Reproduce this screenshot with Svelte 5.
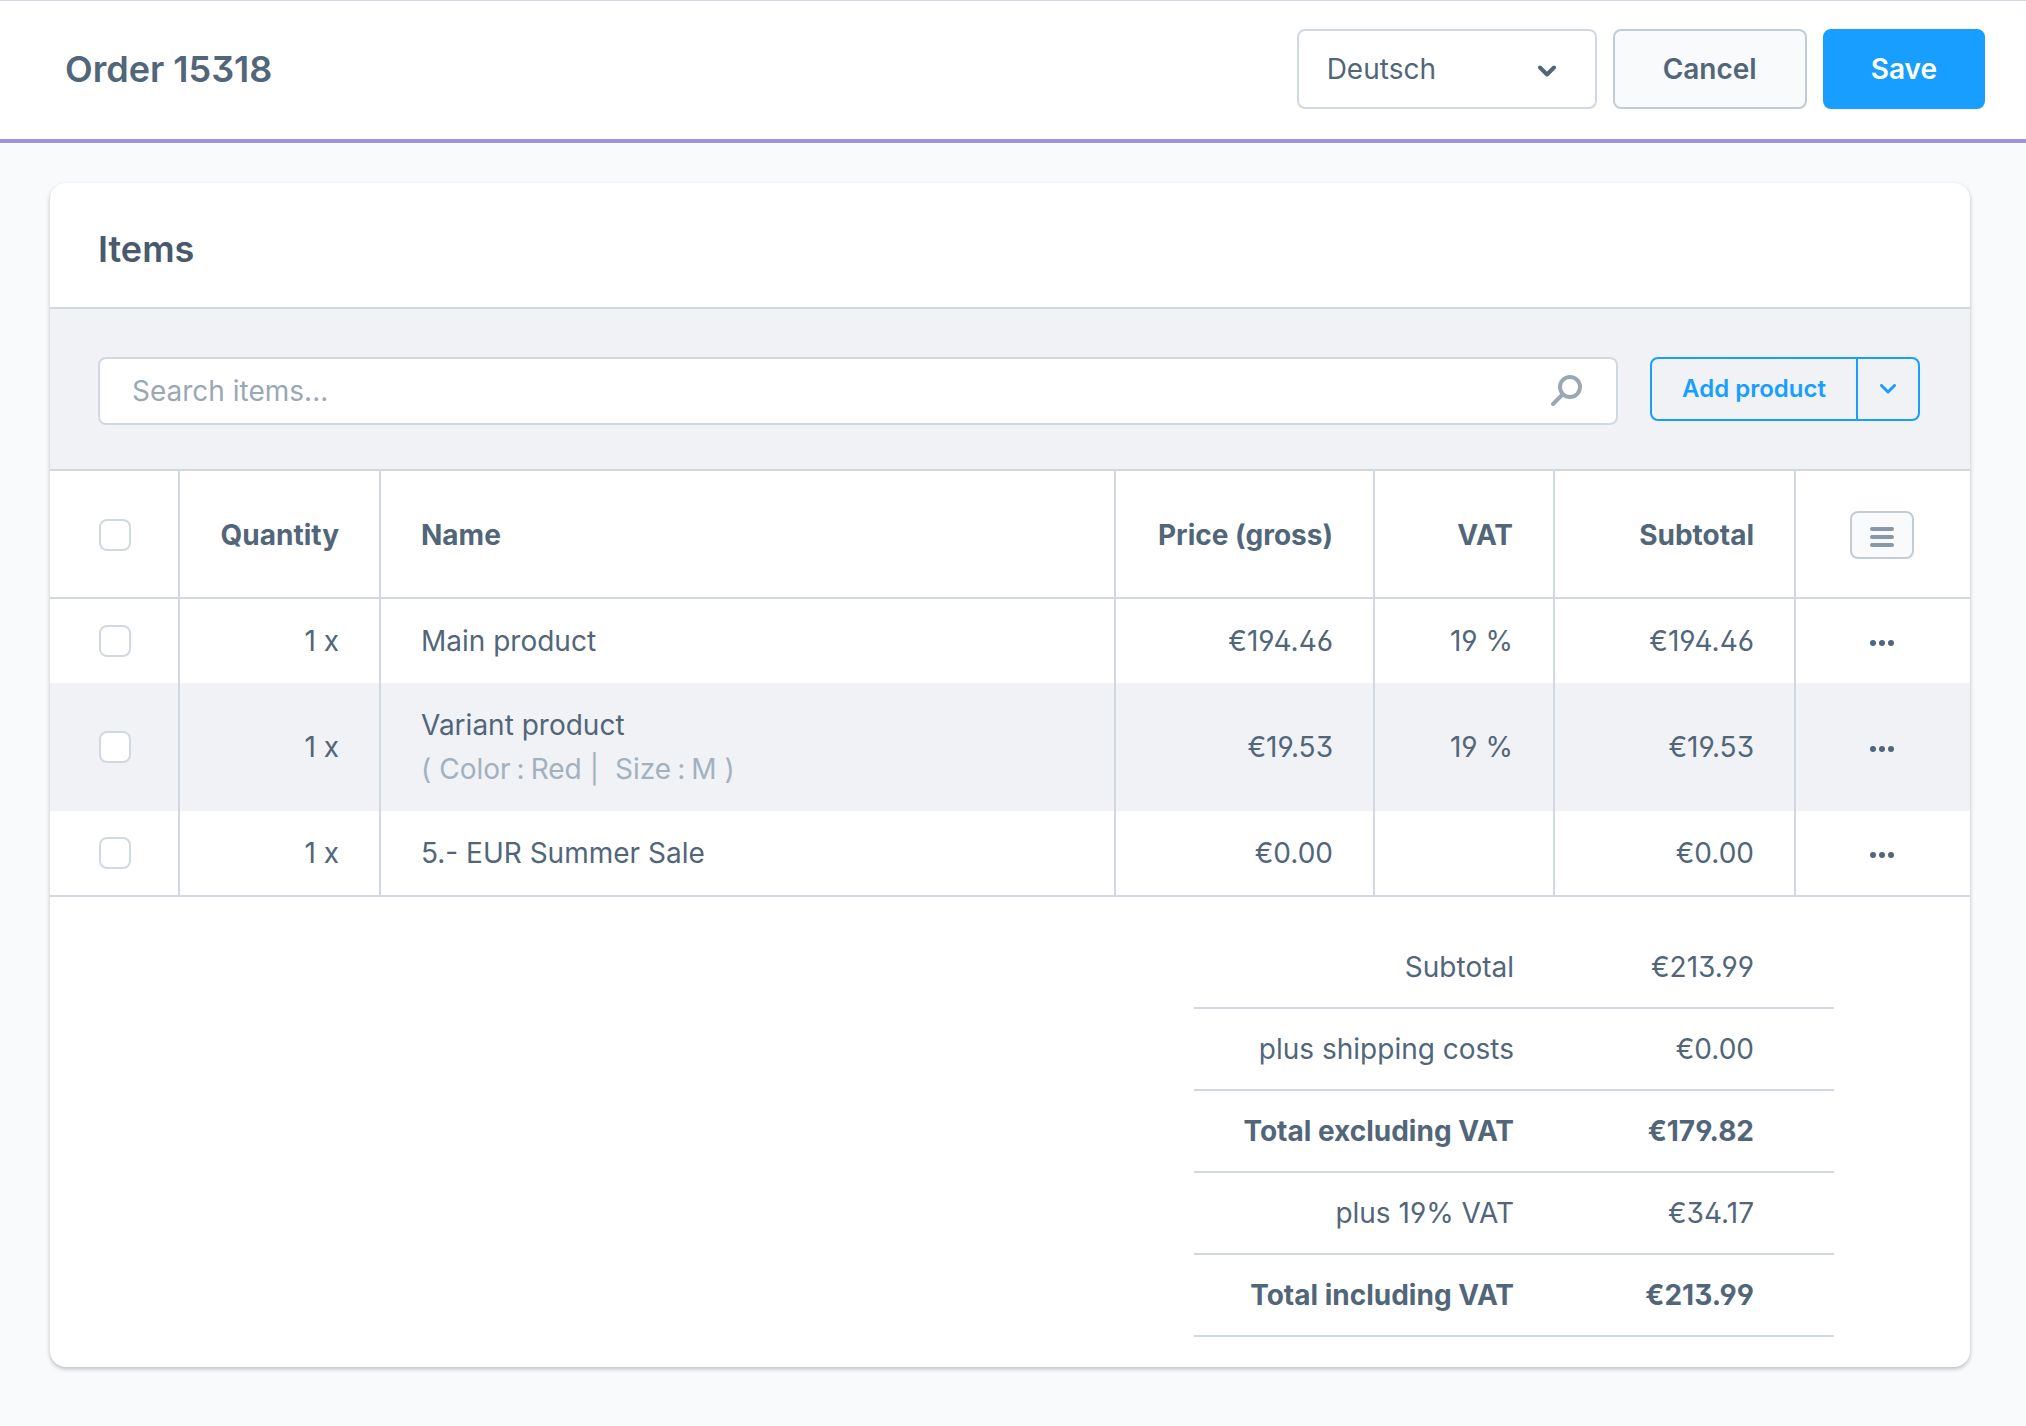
<script>
  let language = 'Deutsch';
  let query = '';

  const languages = ['Deutsch', 'English'];

  const items = [
    { quantity: 1, name: 'Main product', price: '€194.46', vat: '19 %', subtotal: '€194.46' },
    {
      quantity: 1,
      name: 'Variant product',
      options: [
        { group: 'Color', value: 'Red' },
        { group: 'Size', value: 'M' },
      ],
      price: '€19.53',
      vat: '19 %',
      subtotal: '€19.53',
    },
    { quantity: 1, name: '5.- EUR Summer Sale', price: '€0.00', vat: '', subtotal: '€0.00' },
  ];

  const totals = [
    { label: 'Subtotal', value: '€213.99' },
    { label: 'plus shipping costs', value: '€0.00' },
    { label: 'Total excluding VAT', value: '€179.82', strong: true },
    { label: 'plus 19% VAT', value: '€34.17' },
    { label: 'Total including VAT', value: '€213.99', strong: true },
  ];
</script>

<header class="topbar">
  <h1>Order 15318</h1>
  <div class="actions">
    <div class="language">
      <select bind:value={language} aria-label="Language">
        {#each languages as lang}
          <option>{lang}</option>
        {/each}
      </select>
      <svg width="18" height="12" viewBox="0 0 18 12">
        <path d="M2 2.5l7 7 7-7" />
      </svg>
    </div>
    <button class="btn">Cancel</button>
    <button class="btn primary">Save</button>
  </div>
</header>

<main class="card">
  <h2>Items</h2>

  <div class="toolbar">
    <div class="search">
      <input type="text" bind:value={query} placeholder="Search items..." aria-label="Search items" />
      <svg width="32" height="32" viewBox="0 0 32 32">
        <circle cx="20" cy="12" r="10" />
        <path d="M12.5 19.5L3 29" />
      </svg>
    </div>
    <div class="split">
      <button class="add">Add product</button>
      <button class="more" aria-label="More options">
        <svg width="16" height="10" viewBox="0 0 16 10">
          <path d="M1.5 1.5L8 8l6.5-6.5" />
        </svg>
      </button>
    </div>
  </div>

  <table>
    <colgroup>
      <col class="col-check" />
      <col class="col-quantity" />
      <col />
      <col class="col-price" />
      <col class="col-vat" />
      <col class="col-subtotal" />
      <col class="col-menu" />
    </colgroup>
    <thead>
      <tr>
        <th class="check"><input type="checkbox" aria-label="Select all items" /></th>
        <th>Quantity</th>
        <th class="name">Name</th>
        <th>Price (gross)</th>
        <th>VAT</th>
        <th>Subtotal</th>
        <th class="menu">
          <button class="columns" aria-label="List settings">
            <svg width="24" height="24" viewBox="0 0 24 24">
              <path d="M2 6h20M2 14h20M2 22h20" />
            </svg>
          </button>
        </th>
      </tr>
    </thead>
    <tbody>
      {#each items as item}
        <tr>
          <td class="check"><input type="checkbox" aria-label="Select {item.name}" /></td>
          <td>{item.quantity} x</td>
          <td class="name">
            {item.name}
            {#if item.options}
              <div class="options">
                <span>(</span>
                {#each item.options as option}
                  <span class="option">
                    <span>{option.group}</span>
                    <span>:</span>
                    <span>{option.value}</span>
                  </span>
                {/each}
                <span>)</span>
              </div>
            {/if}
          </td>
          <td>{item.price}</td>
          <td>{item.vat}</td>
          <td>{item.subtotal}</td>
          <td class="menu">
            <button class="context" aria-label="Actions for {item.name}">
              <svg width="26" height="12" viewBox="0 0 26 12">
                <circle cx="4" cy="8" r="3" />
                <circle cx="13" cy="8" r="3" />
                <circle cx="22" cy="8" r="3" />
              </svg>
            </button>
          </td>
        </tr>
      {/each}
    </tbody>
  </table>

  <dl class="totals">
    {#each totals as total}
      <div class="total" class:strong={total.strong}>
        <dt>{total.label}</dt>
        <dd>{total.value}</dd>
      </div>
    {/each}
  </dl>
</main>

<style>
  :global(body) {
    background: #f9fafb;
    color: #52667a;
    font-family: Inter, sans-serif;
    font-size: 28px;
    line-height: 44px;
    font-feature-settings: 'ss01', 'cv02', 'cv03', 'cv04';
  }

  button, input, select {
    box-sizing: border-box;
    font: inherit;
    color: inherit;
    margin: 0;
  }

  button {
    cursor: pointer;
  }

  svg {
    fill: none;
    stroke: currentColor;
    stroke-width: 4;
    stroke-linecap: round;
    stroke-linejoin: round;
  }

  /* top bar */
  .topbar {
    display: flex;
    align-items: center;
    justify-content: space-between;
    padding: 28px 41px 30px 65px;
    background: #fff;
    border-top: 1px solid #d1d9e0;
    border-bottom: 4px solid #a092e0;
  }

  h1, h2 {
    margin: 0;
    font-size: 36px;
    font-weight: 600;
  }

  .actions {
    display: flex;
    gap: 16px;
  }

  .language {
    position: relative;
    width: 300px;
  }

  .language select {
    width: 100%;
    height: 80px;
    padding: 0 28px;
    border: 2px solid #d1d9e0;
    border-radius: 8px;
    background: #fff;
    appearance: none;
  }

  .language svg {
    position: absolute;
    top: 36px;
    right: 41px;
    pointer-events: none;
  }

  .btn {
    height: 80px;
    padding: 0 48px;
    border: 2px solid #c2ccd6;
    border-radius: 8px;
    background: #f9fafb;
    font-weight: 600;
  }

  .btn.primary {
    padding: 0 46px;
    border-color: #189eff;
    background: #189eff;
    color: #fff;
  }

  /* card */
  .card {
    margin: 40px 56px 56px 50px;
    background: #fff;
    border-radius: 16px;
    box-shadow: 0 2px 4px rgba(0, 0, 0, 0.25);
    overflow: hidden;
  }

  h2 {
    padding: 44px 48px 36px;
    color: #485a6c;
  }

  .toolbar {
    display: flex;
    align-items: flex-start;
    gap: 32px;
    padding: 48px 50px 44px 48px;
    background: #f0f2f5;
    border-top: 2px solid #d1d9e0;
  }

  .search {
    position: relative;
    flex: 1;
  }

  .search input {
    display: block;
    width: 100%;
    height: 68px;
    padding: 0 80px 0 32px;
    border: 2px solid #d1d9e0;
    border-radius: 8px;
    background: #fff;
    outline: none;
  }

  .search input::placeholder {
    color: #9aa8b5;
    opacity: 1;
  }

  .search svg {
    position: absolute;
    top: 18px;
    right: 36px;
    color: #9aa8b5;
  }

  .split {
    display: flex;
    height: 64px;
    color: #189eff;
    font-size: 24px;
    font-weight: 600;
  }

  .split button {
    border: 2px solid #189eff;
    background: transparent;
  }

  .add {
    width: 208px;
    padding: 0;
    border-radius: 8px 0 0 8px;
  }

  .split .more {
    display: flex;
    align-items: center;
    justify-content: center;
    width: 62px;
    padding: 0;
    border-left: none;
    border-radius: 0 8px 8px 0;
  }

  .more svg {
    stroke-width: 3;
  }

  /* item list */
  table {
    width: 100%;
    table-layout: fixed;
    border-collapse: separate;
    border-spacing: 0;
    border-top: 2px solid #d1d9e0;
    border-bottom: 2px solid #d1d9e0;
  }

  .col-check { width: 130px; }
  .col-quantity { width: 201px; }
  .col-price { width: 259px; }
  .col-vat { width: 180px; }
  .col-subtotal { width: 241px; }
  .col-menu { width: 174px; }

  th, td {
    padding: 20px 40px;
    border-right: 2px solid #d1d9e0;
    text-align: right;
    white-space: nowrap;
  }

  th {
    height: 84px;
    padding-top: 22px;
    border-bottom: 2px solid #d1d9e0;
    font-weight: 700;
  }

  tbody tr:nth-child(even) {
    background: #f0f2f5;
  }

  .name {
    text-align: left;
  }

  .check {
    padding-left: 49px;
    padding-right: 47px;
  }

  .menu {
    padding-left: 54px;
    padding-right: 56px;
    border-right: none;
  }

  input[type='checkbox'] {
    display: block;
    width: 32px;
    height: 32px;
    border: 2px solid #d1d9e0;
    border-radius: 8px;
    background: #fff;
    appearance: none;
  }

  input[type='checkbox']:checked {
    background: #189eff;
    border-color: #189eff;
  }

  .options {
    display: flex;
    gap: 8px;
    color: #a3b1bf;
  }

  .option {
    display: flex;
    gap: 6px;
  }

  .option + .option::before {
    content: '|';
    margin-right: 10px;
  }

  .columns {
    display: flex;
    align-items: center;
    justify-content: center;
    width: 64px;
    height: 48px;
    padding: 0;
    border: 2px solid #c2ccd6;
    border-radius: 8px;
    background: #f9fafb;
    color: #8798a9;
  }

  .context {
    display: flex;
    align-items: center;
    justify-content: center;
    width: 64px;
    height: 44px;
    padding: 0;
    border: none;
    background: none;
  }

  .context svg {
    fill: currentColor;
    stroke: none;
  }

  /* order totals */
  .totals {
    width: 640px;
    margin: 0 136px 0 auto;
    padding: 30px 0;
  }

  .total {
    display: grid;
    grid-template-columns: 1fr 240px;
    padding: 18px 80px 18px 0;
    border-bottom: 2px solid #d1d9e0;
    text-align: right;
  }

  .total dd {
    margin: 0;
  }

  .strong {
    font-weight: 700;
  }
</style>
